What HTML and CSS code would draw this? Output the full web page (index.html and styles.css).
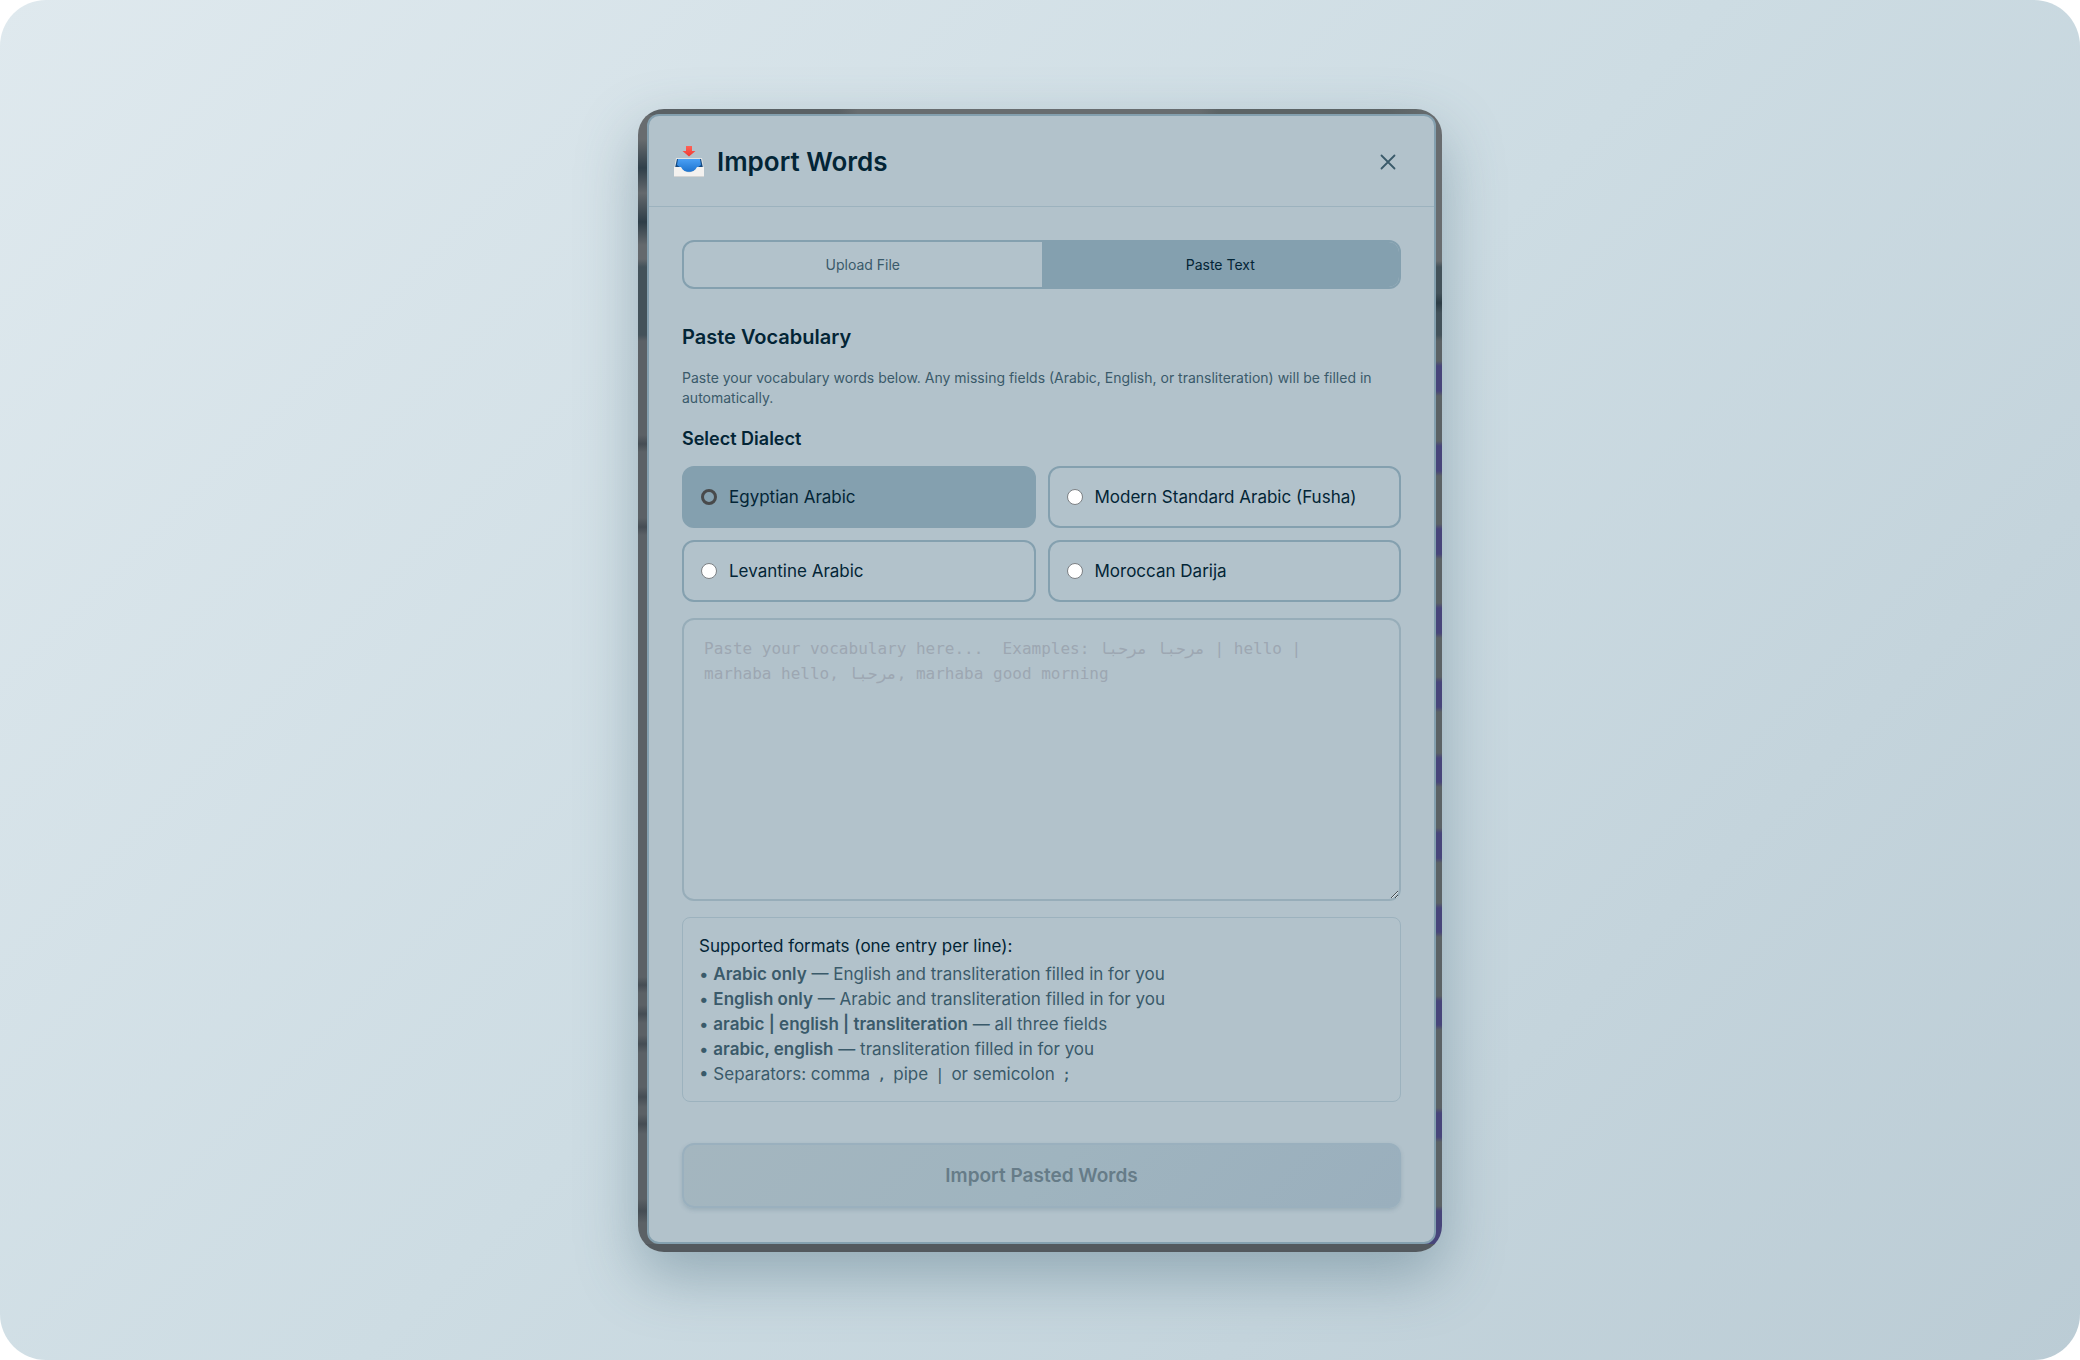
FILE: index.html
```html
<!DOCTYPE html>
<html lang="en">
<head>
<meta charset="utf-8">
<title>Import Words</title>
<link rel="stylesheet" href="styles.css">
</head>
<body>
<main class="stage">
  <div class="frame">
    <section class="dialog" role="dialog" aria-labelledby="dialog-title">
      <header class="dialog-header">
        <svg class="tray" viewBox="0 0 32 32" aria-hidden="true">
          <defs>
            <linearGradient id="blue" x1="0" y1="0" x2="0" y2="1"><stop offset="0" stop-color="#4aa0f5"/><stop offset="1" stop-color="#1f74cf"/></linearGradient>
            <linearGradient id="red" x1="0" y1="0" x2="0" y2="1"><stop offset="0" stop-color="#ff6258"/><stop offset="1" stop-color="#ee3a32"/></linearGradient>
          </defs>
          <path d="M3 12h26l2 11H1z" fill="#dfe3e4"/>
          <path d="M4 13h24l2 9H2z" fill="#15497f"/>
          <path d="M5 13h22l1 6-4 3c-2 5-14 5-16 0l-4-3z" fill="url(#blue)"/>
          <path d="M1 21h7c3 7 13 7 16 0h7v10H1z" fill="#f3f1ef"/>
          <path d="M1 30h30v1H1z" fill="#d3d4d4"/>
          <path d="M13 0h6v5h3.500L16 10.500 9.500 5H13z" fill="url(#red)"/>
        </svg>
        <h1 class="dialog-title" id="dialog-title">Import Words</h1>
        <button class="close" type="button" aria-label="Close">
          <svg class="close-icon" viewBox="0 0 16 16" aria-hidden="true"><path d="M1.500 1.500l13 13M14.500 1.500l-13 13" fill="none" stroke="#3a5a6a" stroke-width="1.800" stroke-linecap="round"/></svg>
        </button>
      </header>
      <form class="dialog-body">
        <div class="tabs" role="tablist">
          <button class="tab" type="button" role="tab" aria-selected="false">Upload File</button>
          <button class="tab tab-active" type="button" role="tab" aria-selected="true">Paste Text</button>
        </div>
        <h2 class="section-title"><label for="words">Paste Vocabulary</label></h2>
        <p class="intro">Paste your vocabulary words below. Any missing fields (Arabic, English, or transliteration) will be filled in automatically.</p>
        <h3 class="dialect-title" id="dialect-title">Select Dialect</h3>
        <div class="dialects" role="radiogroup" aria-labelledby="dialect-title">
          <label class="dialect dialect-active"><input class="radio" type="radio" name="dialect" checked>Egyptian Arabic</label>
          <label class="dialect"><input class="radio" type="radio" name="dialect">Modern Standard Arabic (Fusha)</label>
          <label class="dialect"><input class="radio" type="radio" name="dialect">Levantine Arabic</label>
          <label class="dialect"><input class="radio" type="radio" name="dialect">Moroccan Darija</label>
        </div>
        <textarea class="words" id="words" placeholder="Paste your vocabulary here...  Examples: مرحبا مرحبا | hello | marhaba hello, مرحبا, marhaba good morning"></textarea>
        <div class="formats">
          <p class="formats-title">Supported formats (one entry per line):</p>
          <p class="format">• <strong>Arabic only</strong> — English and transliteration filled in for you</p>
          <p class="format">• <strong>English only</strong> — Arabic and transliteration filled in for you</p>
          <p class="format">• <strong>arabic | english | transliteration</strong> — all three fields</p>
          <p class="format">• <strong>arabic, english</strong> — transliteration filled in for you</p>
          <p class="format">• Separators: comma <code>,</code> pipe <code>|</code> or semicolon <code>;</code></p>
        </div>
        <button class="submit" type="submit" disabled>Import Pasted Words</button>
      </form>
    </section>
  </div>
</main>
</body>
</html>
```

FILE: styles.css
```css
* { box-sizing: border-box; }

body {
  margin: 0;
  background: #fff;
  color: #032536;
  font-family: Inter, "Liberation Sans", sans-serif;
}

h1, h2, h3, p { margin: 0; }

button { font-family: inherit; }

.stage {
  display: flex;
  justify-content: center;
  align-items: center;
  min-height: 100vh;
  border-radius: 46px;
  background: linear-gradient(135deg, #dfe9ee 0%, #cddce3 50%, #bbccd5 100%);
}

/* The rim shows slivers of the dimmed page behind the dialog. */
.frame {
  --rim: #5b6166;
  --mark: #454d54;
  --item: #47457a;
  width: 100%;
  max-width: 804px;
  padding: 5px 6px 8px 9px;
  border-radius: 26px;
  background:
    linear-gradient(#53595e, #53595e) bottom / 100% 8px no-repeat,
    linear-gradient(90deg, #5a6165 0 200px, #686d70 220px 560px, #5c6466 580px 750px, #686d70) top / 100% 6px no-repeat,
    linear-gradient(
      #686c6f 0 152px, #43525a 158px 184px, #2c3c45 194px, #43525a 204px 226px, #5b6265 232px 252px,
      var(--item) 257px 282px, #5b6265 287px 332px,
      var(--item) 337px 362px, #5b6265 367px 415px,
      var(--item) 420px 445px, #5b6265 450px 494px,
      var(--item) 499px 524px, #5b6265 529px 568px,
      var(--item) 573px 598px, #5b6265 603px 644px,
      var(--item) 649px 673px, #5b6265 678px 719px,
      var(--item) 724px 749px, #5b6265 754px 794px,
      var(--item) 799px 823px, #5b6265 828px 887px,
      var(--item) 892px 916px, #5b6265 921px 999px,
      var(--item) 1004px 1028px, #5b6265 1033px 1097px,
      var(--item) 1102px 1128px
    ) right / 50% 100% no-repeat,
    linear-gradient(
      #686c6f 0 30px, #30404a 59px, #64696d 84px, #2e3e48 113px, #64696d 136px 150px,
      #43525a 158px 226px, var(--rim) 232px 326px, var(--mark) 335px, var(--rim) 343px 409px,
      var(--mark) 418px, var(--rim) 426px 868px, var(--mark) 876px, var(--rim) 884px 896px,
      var(--mark) 905px, var(--rim) 914px 926px, var(--mark) 935px, var(--rim) 944px 978px,
      var(--mark) 988px, var(--rim) 998px 1005px, var(--mark) 1015px, var(--rim) 1025px 1090px,
      var(--mark) 1102px, var(--rim) 1114px
    );
  box-shadow: 0 24px 60px rgba(65, 100, 118, 0.4);
}

.dialog {
  border: 2px solid #84a0af;
  border-radius: 12px;
  background: #b2c2cb;
}

.dialog-header {
  display: flex;
  align-items: center;
  gap: 12px;
  height: 91px;
  padding: 2px 34px 0 24px;
  border-bottom: 1px solid #9cb2be;
}

.tray { width: 32px; height: 32px; }

.dialog-title {
  flex: 1;
  font-size: 26px;
  line-height: 32px;
  font-weight: 600;
}

.close {
  display: flex;
  padding: 4px;
  border: 0;
  background: none;
}

.close-icon { width: 16px; height: 16px; }

.dialog-body {
  display: flex;
  flex-direction: column;
  padding: 33px 33px 34px;
}

.tabs {
  display: grid;
  grid-template-columns: 1fr 1fr;
  height: 49px;
  border: 2px solid #84a0af;
  border-radius: 12px;
  overflow: hidden;
}

.tab {
  padding: 2px 0 0;
  border: 0;
  background: none;
  color: #3a5a6a;
  font-size: 14px;
  line-height: 20px;
}

.tab-active { background: #84a0af; color: #032536; }

.section-title {
  margin-top: 34px;
  font-size: 20px;
  line-height: 28px;
  font-weight: 600;
}

.intro {
  margin-top: 17px;
  color: #3a5a6a;
  font-size: 14px;
  line-height: 20px;
}

.dialect-title {
  margin-top: 19px;
  font-size: 18px;
  line-height: 24px;
  font-weight: 600;
}

.dialects {
  display: grid;
  grid-template-columns: 1fr 1fr;
  gap: 12px;
  margin-top: 15px;
}

.dialect {
  display: flex;
  align-items: center;
  gap: 12px;
  height: 62px;
  padding: 0 17px;
  border: 2px solid #84a0af;
  border-radius: 12px;
  font-size: 17px;
  line-height: 24px;
}

.dialect-active { background: #84a0af; }

.radio {
  appearance: none;
  width: 16px;
  height: 16px;
  margin: 0;
  border: 1px solid #7c8084;
  border-radius: 50%;
  background: #fff;
}

.radio:checked { border: 3px solid #484a4b; background: none; }

.words {
  display: block;
  width: 100%;
  height: 283px;
  margin-top: 16px;
  padding: 16px 32px 16px 20px;
  border: 2px solid #97adb9;
  border-radius: 12px;
  background: none;
  font-family: "DejaVu Sans Mono", monospace;
  font-size: 16px;
  line-height: 25px;
  resize: vertical;
}

.words::placeholder { color: #9da7b2; }

.formats {
  margin-top: 16px;
  padding: 16px 16px 14px;
  border: 1px solid #9cb2be;
  border-radius: 8px;
  color: #3a5a6a;
  font-size: 17px;
}

.formats-title {
  margin-bottom: 4px;
  color: #032536;
  line-height: 24px;
}

.format { line-height: 25px; }

.format strong { font-weight: 600; }

.format code {
  padding: 0 2px;
  font-family: "DejaVu Sans Mono", monospace;
  font-size: 16px;
}

.submit {
  height: 65px;
  margin-top: 41px;
  border: 2px solid #9ab0be;
  border-radius: 12px;
  background: linear-gradient(135deg, #a4b6bf, #9fb4bf 50%, #9aafbd);
  box-shadow: 0 2px 4px rgba(60, 95, 115, 0.2);
  color: #667c88;
  font-size: 19px;
  font-weight: 600;
}
```
